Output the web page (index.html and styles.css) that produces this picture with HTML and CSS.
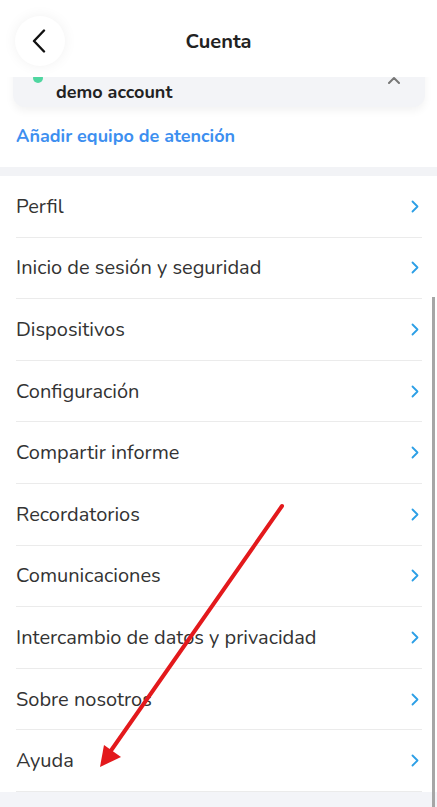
FILE: index.html
```html
<!DOCTYPE html>
<html lang="es">
<head>
  <meta charset="UTF-8" />
  <meta name="viewport" content="width=device-width, initial-scale=1" />
  <title>Cuenta</title>
  <link rel="stylesheet" href="styles.css">
</head>
<body>

  <div class="screen">
    <!-- Barre du haut -->
    <header class="topbar">
      <button class="back-btn" aria-label="Volver">
        <svg width="14" height="24" viewBox="0 0 14 24">
          <path d="M12 1.5 L2 12 L12 22.5" fill="none" stroke="#111" stroke-width="2.4" stroke-linecap="round" stroke-linejoin="round"/>
        </svg>
      </button>
      <h1>Cuenta</h1>
    </header>

    <main class="content">
      <!-- Carte du compte (en partie sous la barre) -->
      <div class="account-card">
        <div class="account-top">
          <span class="status-dot"></span>
          <svg class="collapse" width="14" height="8" viewBox="0 0 14 8">
            <path d="M2 7 L7 2 L12 7" fill="none" stroke="#777" stroke-width="2" stroke-linecap="round" stroke-linejoin="round"/>
          </svg>
        </div>
        <div class="account-name">demo account</div>
      </div>

      <a class="add-team" href="#">Añadir equipo de atención</a>

      <div class="band"></div>

      <ul class="menu" id="menu"></ul>

      <div class="band bottom"></div>
    </main>

    <!-- Barre de défilement -->
    <div class="scrollbar"></div>

    <!-- Flèche d'annotation -->
    <svg class="annotation" width="437" height="807" viewBox="0 0 437 807">
      <line x1="282" y1="506" x2="110" y2="752" stroke="#e3191c" stroke-width="4" stroke-linecap="round"/>
      <polygon points="100,767 104,745 121,757" fill="#e3191c"/>
    </svg>
  </div>

  <script>
    // Entrées du menu
    const items = [
      'Perfil',
      'Inicio de sesión y seguridad',
      'Dispositivos',
      'Configuración',
      'Compartir informe',
      'Recordatorios',
      'Comunicaciones',
      'Intercambio de datos y privacidad',
      'Sobre nosotros',
      'Ayuda'
    ];

    const menu = document.getElementById('menu');
    items.forEach(label => {
      const li = document.createElement('li');
      li.className = 'menu-row';
      li.innerHTML = `
        <span>${label}</span>
        <svg width="8" height="13" viewBox="0 0 8 13">
          <path d="M1.5 1.5 L6.5 6.5 L1.5 11.5" fill="none" stroke="#2c9fe6" stroke-width="1.8" stroke-linecap="round" stroke-linejoin="round"/>
        </svg>
      `;
      menu.appendChild(li);
    });
  </script>
</body>
</html>
```

FILE: styles.css
```css
* {
  box-sizing: border-box;
}
body {
  margin: 0;
  font-family: "Nunito", Lato, "Open Sans", sans-serif;
  background: #fff;
  color: #333;
}
.screen {
  position: relative;
  width: 437px;
  height: 807px;
  overflow: hidden;
  display: flex;
  flex-direction: column;
}

/* Barre du haut */
.topbar {
  position: relative;
  z-index: 2;
  height: 77px;
  flex-shrink: 0;
  background: #fff;
  display: flex;
  align-items: center;
  justify-content: center;
}
.back-btn {
  position: absolute;
  left: 15px;
  top: 16px;
  width: 50px;
  height: 50px;
  border-radius: 50%;
  border: none;
  background: #fff;
  box-shadow: 0 0 14px rgba(0,0,0,0.06);
  display: flex;
  align-items: center;
  justify-content: center;
  padding: 0 3px 0 0;
}
.topbar h1 {
  margin: 0;
  margin-top: 5px;
  font-size: 20px;
  font-weight: 700;
  color: #222;
}

/* Contenu */
.content {
  flex: 1;
  display: flex;
  flex-direction: column;
}
.account-card {
  margin: -12px 12px 0 13px;
  background: #f3f4f7;
  border-radius: 0 0 12px 12px;
  box-shadow: 0 4px 8px rgba(0,0,0,0.05);
  padding: 7px 24px 4px 20px;
}
.account-top {
  display: flex;
  justify-content: space-between;
  align-items: flex-start;
  height: 9px;
}
.status-dot {
  width: 10px;
  height: 10px;
  margin-top: 1px;
  border-radius: 50%;
  background: #4fd6a0;
}
.collapse {
  margin-top: 4px;
}
.account-name {
  padding-left: 23px;
  font-size: 18px;
  font-weight: 700;
  color: #222;
  line-height: 22px;
}
.add-team {
  margin: 17px 16px 0;
  font-size: 18px;
  font-weight: 700;
  color: #3d8ff0;
  text-decoration: none;
  line-height: 24px;
}
.band {
  margin-top: 19px;
  height: 9px;
  background: #f2f3f6;
}
.band.bottom {
  margin-top: 0;
  flex: 1;
  background: #f3f4f8;
}

/* Liste du menu */
.menu {
  list-style: none;
  margin: 0;
  padding: 0;
}
.menu-row {
  height: 61.6px;
  margin: 0 15px 0 16px;
  border-bottom: 1px solid #ebebeb;
  display: flex;
  align-items: center;
  justify-content: space-between;
  padding-right: 3px;
  font-size: 20px;
  color: #333;
}

.scrollbar {
  position: absolute;
  left: 432px;
  top: 297px;
  width: 3px;
  height: 510px;
  background: #a6a6a6;
}
.annotation {
  position: absolute;
  left: 0;
  top: 0;
  pointer-events: none;
}
```
